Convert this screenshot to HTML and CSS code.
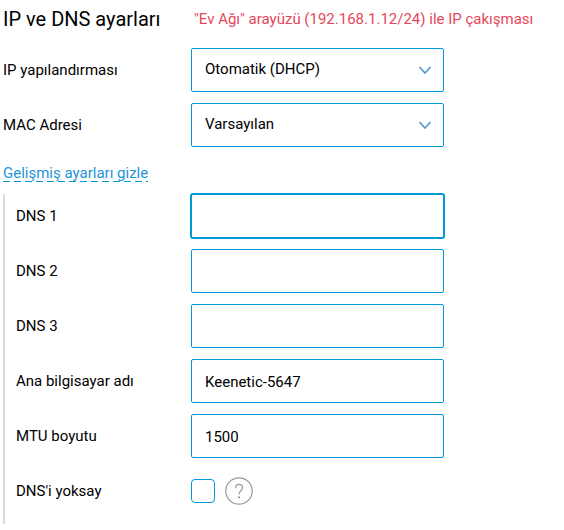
FILE: index.html
```
<!DOCTYPE html>
<html lang="tr">
<head>
  <meta charset="UTF-8">
  <meta name="viewport" content="width=device-width, initial-scale=1.0">
  <title>IP ve DNS ayarları</title>
  <link rel="stylesheet" href="styles.css">
</head>
<body>
  <form class="settings">
    <div class="header">
      <h2>IP ve DNS ayarları</h2>
      <p class="error">"Ev Ağı" arayüzü (192.168.1.12/24) ile IP çakışması</p>
    </div>

    <div class="row">
      <label for="ip">IP yapılandırması</label>
      <div class="select">
        <select id="ip">
          <option>Otomatik (DHCP)</option>
        </select>
        <svg class="arrow" viewBox="0 0 12 8"><path d="M.5 1L6 7l5.5-6"/></svg>
      </div>
    </div>
    <div class="row">
      <label for="mac">MAC Adresi</label>
      <div class="select">
        <select id="mac">
          <option>Varsayılan</option>
        </select>
        <svg class="arrow" viewBox="0 0 12 8"><path d="M.5 1L6 7l5.5-6"/></svg>
      </div>
    </div>

    <a class="toggle" href="#advanced">Gelişmiş ayarları gizle</a>

    <div class="advanced" id="advanced">
      <div class="row">
        <label for="dns1">DNS 1</label>
        <input class="field active" type="text" id="dns1">
      </div>
      <div class="row">
        <label for="dns2">DNS 2</label>
        <input class="field" type="text" id="dns2">
      </div>
      <div class="row">
        <label for="dns3">DNS 3</label>
        <input class="field" type="text" id="dns3">
      </div>
      <div class="row">
        <label for="host">Ana bilgisayar adı</label>
        <input class="field" type="text" id="host" value="Keenetic-5647">
      </div>
      <div class="row">
        <label for="mtu">MTU boyutu</label>
        <input class="field" type="text" id="mtu" value="1500">
      </div>
      <div class="row">
        <label for="ignore">DNS'i yoksay</label>
        <div class="check">
          <input type="checkbox" id="ignore">
          <button class="help" type="button" aria-label="Yardım">
            <svg viewBox="0 0 28 28">
              <circle cx="14" cy="14" r="13.2"/>
              <path d="M10.6 11.2c0-2.3 1.4-3.8 3.5-3.8s3.4 1.4 3.4 3.3c0 3.2-3.4 3-3.4 6.6"/>
              <circle class="dot" cx="14" cy="20.3" r="1.1"/>
            </svg>
          </button>
        </div>
      </div>
    </div>
  </form>
</body>
</html>
```
FILE: styles.css
```
* {
  box-sizing: border-box;
}

body {
  margin: 0;
  background-color: #fff;
  color: #000;
  font: 15px/20px Roboto, "Liberation Sans", sans-serif;
}

.settings {
  padding: 0 3px 6px;
}

.header {
  display: flex;
  align-items: center;
  height: 38px;
  margin-bottom: 10px;
}

h2 {
  flex: 0 0 191px;
  margin: 0;
  font-size: 20px;
  font-weight: 400;
}

.error {
  margin: 0;
  color: #e5475a;
  white-space: nowrap;
}

.row {
  display: flex;
  align-items: center;
  height: 44px;
  margin-bottom: 11px;
}

.row label {
  flex: 0 0 188px;
}

.select {
  position: relative;
  flex: 0 1 253px;
}

select, .field {
  height: 44px;
  border: 1px solid #0098d8;
  border-radius: 2px;
  padding: 0 13px;
  background-color: #fff;
  color: #000;
  font: inherit;
  outline: none;
}

select {
  display: block;
  width: 100%;
  appearance: none;
  padding-bottom: 2px;
}

.field {
  flex: 0 1 253px;
  min-width: 0;
  padding-top: 2px;
}

.field.active, .field:focus {
  box-shadow: 0 0 0 1px #0098d8;
}

.arrow {
  position: absolute;
  top: 18px;
  right: 13px;
  width: 12px;
  height: 8px;
  fill: none;
  stroke: #5b94cd;
  stroke-width: 1.6;
  pointer-events: none;
}

.toggle {
  display: inline-block;
  margin-top: 4px;
  padding-top: 2px;
  line-height: 18px;
  background: repeating-linear-gradient(90deg, #0098d8 0 7px, transparent 7px 11px) left bottom / 100% 1px no-repeat;
  color: #2494d6;
  text-decoration: none;
}

.advanced {
  display: flow-root;
  margin-top: 11px;
  border-left: 2px solid #d5dae6;
  padding-left: 11px;
}

.advanced .row label {
  flex-basis: 175px;
}

.check {
  display: flex;
  align-items: center;
  gap: 10px;
}

.check input {
  appearance: none;
  width: 24px;
  height: 24px;
  margin: 0;
  border: 1px solid #0098d8;
  border-radius: 4px;
}

.check input:checked {
  background-color: #0098d8;
}

.help {
  width: 28px;
  height: 28px;
  border: 0;
  padding: 0;
  background: none;
  cursor: pointer;
}

.help svg {
  display: block;
  fill: none;
  stroke: #999;
  stroke-width: 1.2;
}

.help .dot {
  fill: #999;
  stroke: none;
}
```
